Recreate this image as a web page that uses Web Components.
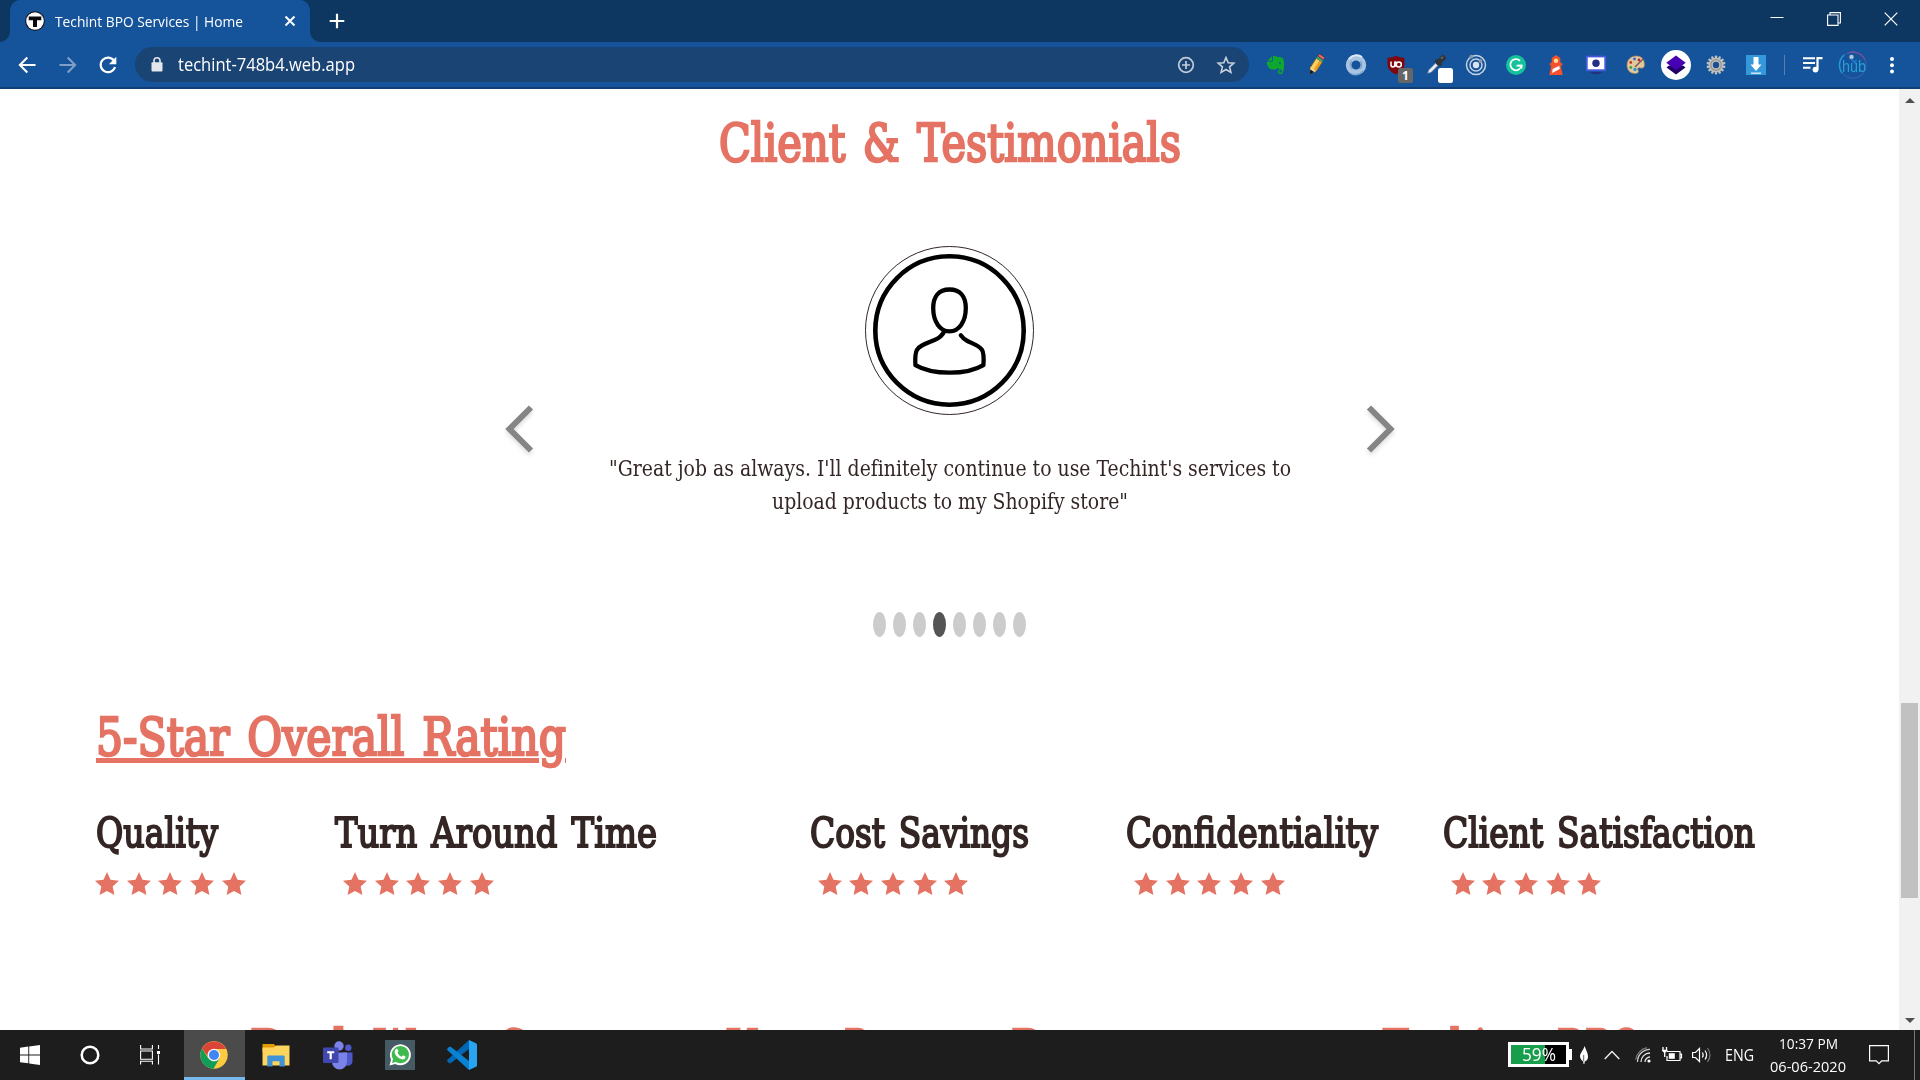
<!DOCTYPE html>
<html lang="en">
<head>
<meta charset="utf-8">
<title>Techint BPO Services | Home</title>
<style>
html,body{margin:0;padding:0;width:1920px;height:1080px;overflow:hidden;background:#fff}
</style>
</head>
<body>
<desktop-screen></desktop-screen>
<script>
const define=(name,cls)=>customElements.define(name,cls);
const view=(name,html)=>define(name,class extends HTMLElement{
  connectedCallback(){ if(!this.shadowRoot){ this.attachShadow({mode:'open'}).innerHTML=html; } }
});

/* One line of text, condensed or widened to the width given */
define('fit-text',class extends HTMLElement{
  connectedCallback(){
    if(this.shadowRoot) return;
    const r=this.attachShadow({mode:'open'});
    r.innerHTML=`<style>:host{display:block;white-space:nowrap;flex:none;font-variant-ligatures:none}
      .t{display:inline-block;transform-origin:0 50%;vertical-align:top}
      :host([underline]) .t{text-decoration:underline;text-decoration-thickness:5px;text-underline-offset:3px}</style><span class="t"><slot></slot></span>`;
    const w=+this.getAttribute('w'), t=r.querySelector('.t');
    this.style.width=w+'px';
    t.style.transform=`scaleX(${w/t.getBoundingClientRect().width})`;
  }
});

const teeth=Array.from({length:7},(_,i)=>`<rect x="8.8" y=".5" width="2.4" height="19" rx=".8" transform="rotate(${i*180/7} 10 10)"/>`).join('');
const ICONS={
 favicon:[20,20,`<circle cx="10" cy="10" r="9.8" fill="#111"/><circle cx="10" cy="10" r="8.8" fill="#fff"/><path d="M3.700 5.500h12.600v3.700H12V16H8V9.200H3.700z" fill="#0a0a0a"/>`],
 close:[12,12,`<path d="M1.5 1.5l9 9m0-9l-9 9" stroke="#fff" stroke-width="2"/>`],
 plus:[16,16,`<path d="M8 .7v14.6M.7 8h14.6" stroke="#fff" stroke-width="2.2"/>`],
 back:[18,18,`<path d="M17.5 9H2.3M9.3 1.6L1.9 9l7.4 7.4" fill="none" stroke="#fff" stroke-width="2.1"/>`],
 forward:[18,18,`<path d="M.5 9h15.2M8.7 1.6L16.1 9l-7.4 7.4" fill="none" stroke="#7e9fc8" stroke-width="2.1"/>`],
 reload:[18,18,`<path d="M15.2 5A7.3 7.3 0 1 0 16 11" fill="none" stroke="#fff" stroke-width="2.2"/><path d="M17.3.8v7.4H9.9z" fill="#fff"/>`],
 lock:[12,15,`<rect x=".5" y="5.2" width="11" height="9.3" rx="1" fill="#e3e6ea"/><path d="M3 6V3.8a3 3 0 0 1 6 0V6" fill="none" stroke="#e3e6ea" stroke-width="1.6"/>`],
 zoomin:[18,18,`<circle cx="9" cy="9" r="7.3" fill="none" stroke="#c3ccd8" stroke-width="1.7"/><path d="M9 5v8M5 9h8" stroke="#c3ccd8" stroke-width="1.7"/>`],
 star:[18,18,`<path d="M9 1.6l2.2 5.1 5.6.5-4.2 3.7 1.3 5.5L9 13.5l-4.9 2.9 1.3-5.5L1.2 7.2l5.6-.5z" fill="none" stroke="#c9d0da" stroke-width="1.6"/>`],
 evernote:[20,20,`<path d="M6 1.2v3.5c0 .6-.4 1-1 1H1.5zM7 1.2c1.6-.5 3.2-.2 3.800.8 2 .1 4.900.2 6 1.200 1.400 2 1.600 6.500 1 10.500-.5 3.500-1 5.500-3.300 5.500-2 0-2.600-1.200-2.600-2.600 0-1.500.9-2.200 2.400-2.200v1.500c-.8 0-1.100.3-1.100.9s.6.9 1.300.9c1.200 0 1.300-1.400 1.200-3-2.400-.4-3.400-.8-3.800-2.300-.5 1.500-1.500 2.100-3.500 2.100-3.600 0-5.600-1-6.200-3.100C.8 9.700.6 7.800 1 6.700h4.300C6.400 6.700 7 6 7 5z" fill="#0fa82f"/><circle cx="14" cy="8.200" r="1" fill="#15549a"/>`],
 pencil:[20,20,`<g transform="rotate(33 10 10)"><path d="M6.500 4h7v11L10 20.500 6.500 15z" fill="#f9d060" stroke="#6c5527" stroke-width=".8"/><path d="M10.500 4h3v11h-3z" fill="#ea9c22"/><path d="M6.500 15h7L10 20.500z" fill="#ecd3a0"/><path d="M7.700 17h4.600L10 21z" fill="#111"/><rect x="6.500" y="1.400" width="7" height="3" fill="#3e9d63"/><rect x="6.500" y="-1.200" width="7" height="2.800" rx="1" fill="#e06a70" stroke="#511" stroke-width=".5"/></g>`],
 ring:[22,22,`<circle cx="11" cy="11" r="7.400" fill="none" stroke="#a9c4e1" stroke-width="5.600"/><path d="M4 5a9.500 9.500 0 0 1 13-2" fill="none" stroke="#dfeaf5" stroke-width="2"/><path d="M18 17a9.500 9.500 0 0 1-13 2M6.500 7a6 6 0 0 0 1 8M15.500 7a6 6 0 0 1-1 8" fill="none" stroke="#7ba3d0" stroke-width="1.500"/>`],
 shield:[20,20,`<path d="M10 .5c2 1.500 5 2.200 8.500 2.200v6c0 5-3 8.300-8.500 10.800C4.500 17 1.500 13.700 1.500 8.700v-6C5 2.700 8 2 10 .5z" fill="#800610"/><path d="M5 6.500V10a1.900 1.900 0 0 0 3.800 0V6.500M9.600 6.200v5.600" fill="none" stroke="#fff" stroke-width="1.500"/><circle cx="12.800" cy="9.400" r="2.500" fill="none" stroke="#fff" stroke-width="1.500"/>`],
 dropper:[20,20,`<path d="M1.800 18.200l1-3.200 8-8 2.300 2.300-8 8z" fill="#e9edf2" stroke="#8894a3" stroke-width=".7"/><path d="M9.500 5l5.600 5.600" stroke="#2f3338" stroke-width="3"/><path d="M12.500 7.500l4.600-4.600" stroke="#30343a" stroke-width="5.500" stroke-linecap="round"/><path d="M15 3.500l2-1.500" stroke="#6e747c" stroke-width="1.500"/>`],
 target:[22,22,`<g fill="none" stroke="#c3d2e4" stroke-width="1.500"><circle cx="11" cy="11" r="9.500"/><circle cx="11" cy="11" r="6"/></g><circle cx="11" cy="11" r="3.200" fill="#dbe4ee"/><circle cx="6.300" cy="2.700" r="1.900" fill="#8d99a8"/><circle cx="15.500" cy="7" r="1.900" fill="#8d99a8"/>`],
 grammar:[20,20,`<circle cx="10" cy="10" r="10" fill="#15c39a"/><path d="M14 5.800A5.600 5.600 0 1 0 15.500 10.600h-5" fill="none" stroke="#fff" stroke-width="1.700"/><path d="M12.600 10.600h3v3" fill="none" stroke="#fff" stroke-width="1.600"/>`],
 lighthouse:[20,20,`<path d="M10 0l4.300 3v4.500l2 1v2h-1.500l1.900 9.500H3.300l1.900-9.500H3.700v-2l2-1V3z" fill="#f4512c"/><circle cx="10" cy="5.700" r="2.200" fill="#fde293"/><path d="M6.600 14l6.700-3.300.5 3.300-7.700 4z" fill="#fff"/>`],
 screen:[20,20,`<path d="M4 17h12c-1 3-11 3-12 0z" fill="#26317f"/><rect x=".8" y="1.500" width="18.400" height="13.700" fill="#fff" stroke="#4659dc" stroke-width="1.800"/><circle cx="10" cy="8.300" r="3.700" fill="#252f85"/>`],
 palette:[20,20,`<path d="M11 1C5 .5 1 5 1 10s3 8.500 8 8.500c3.500 0 4-2 3-3.500s.5-3 2.500-2c2 .7 4-.5 4-3C18.500 5 16 1.300 11 1z" fill="#e2c79f" stroke="#a78358" stroke-width=".7"/><circle cx="8.500" cy="4" r="1.400" fill="#3764d4"/><circle cx="4.800" cy="7.500" r="1.400" fill="#cb352c"/><circle cx="4.800" cy="12.500" r="1.400" fill="#45a23d"/><circle cx="9" cy="14.500" r="1.700" fill="#2698dd"/><circle cx="13" cy="5" r="1.400" fill="#b22a2a"/><path d="M9 12l8-8" stroke="#6d5842" stroke-width="1.300"/>`],
 layers:[30,30,`<circle cx="15" cy="15" r="15" fill="#fff"/><path d="M5.500 17.500L15 24.500l9.500-7L22 15.500H8z" fill="#220066"/><path d="M15 5.500l9.700 7.300L15 20l-9.700-7.200z" fill="#4700b3"/>`],
 gear:[20,20,`<g fill="#c0c0bd">${teeth}<circle cx="10" cy="10" r="7.300"/></g><circle cx="10" cy="10" r="5.300" fill="none" stroke="#969490" stroke-width="1.300"/><circle cx="10" cy="10" r="3.200" fill="#184f94"/>`],
 download:[20,20,`<rect width="20" height="20" fill="#3498db"/><path d="M7.500 2h5v7.500h3L10 16 4.500 9.500h3z" fill="#fff"/><path d="M5 18.200h10" stroke="#cfe7f7" stroke-width="1.500"/>`],
 playlist:[20,18,`<path d="M0 2.300h12M0 7h12M0 11.700h7.500" stroke="#fff" stroke-width="2.100"/><circle cx="12.500" cy="13.600" r="2.900" fill="#fff"/><path d="M14.500 13.500V2.200h5" fill="none" stroke="#fff" stroke-width="2.200"/>`],
 hub:[28,28,`<circle cx="14" cy="14" r="13.300" fill="none" stroke="#3c63a9" stroke-width="1"/><path d="M3 22A13.300 13.300 0 0 1 5 4" fill="none" stroke="#2498d8" stroke-width="1.400"/><path d="M9 2A13.300 13.300 0 0 1 26 9" fill="none" stroke="#75519b" stroke-width="1.200"/><circle cx="12.500" cy="6" r="2.200" fill="#b7c9d6"/><path d="M12 8l4 4 1-3" stroke="#1b79c9" stroke-width="2" fill="none"/>`],
 menu:[6,18,`<g fill="#fff"><circle cx="3" cy="3" r="2"/><circle cx="3" cy="9.300" r="2"/><circle cx="3" cy="15.500" r="2"/></g>`],
 min:[14,14,`<path d="M.5 5.500h13" stroke="#fff"/>`],
 restore:[14,14,`<path d="M3 3V.6h10.400v10.400H11M.6 3h10.400v10.400H.6z" fill="none" stroke="#fff" stroke-width="1.100"/>`],
 winclose:[14,14,`<path d="M.7.7l12.600 12.600m0-12.600L.7 13.300" stroke="#fff" stroke-width="1.200"/>`],
 windows:[20,20,`<path d="M0 2.700l8.300-1.100v7.900H0zM9.200 1.500L20 0v9.500H9.200zM0 10.400h8.300v7.900L0 17.200zM9.200 10.400H20V20L9.200 18.500z" fill="#fff"/>`],
 cortana:[20,20,`<circle cx="10" cy="10" r="8.300" fill="none" stroke="#fff" stroke-width="2.500"/>`],
 taskview:[20,20,`<path d="M.6 0v4h11.800V0M.6 19.500v-3.200h11.800v3.200M.6 6h11.800v8.200H.6zM18.500 0v4M18.500 9.500V19.500" fill="none" stroke="#fff" stroke-width="1.100"/><rect x="17" y="6" width="3" height="3" fill="#fff"/>`],
 chrome:[28,28,`<circle cx="14" cy="14" r="13.700" fill="#fdcb3e"/><path d="M2.100 7.200A13.700 13.700 0 0 0 13.500 27.700l6-10.500-5.500 3.200-5.800-3.200z" fill="#0f9d58"/><path d="M2.100 7.200A13.700 13.700 0 0 1 26 7.900H14L8.300 10.700 7.500 15z" fill="#db4437"/><circle cx="14" cy="14" r="6.300" fill="#f4f4f4"/><circle cx="14" cy="14" r="5" fill="#4285f4"/>`],
 explorer:[28,24,`<path d="M.5 1h11.500l2 2.500H13V9H.5z" fill="#e09b00"/><path d="M.5 4.500h11L14 2.500h13.500v20H.5z" fill="#fdd45d"/><path d="M5.300 23.500v-10q0-1 1-1h15.400q1 0 1 1v10h-5.200v-5.300h-7v5.300z" fill="#3e92d8"/>`],
 teams:[30,28,`<circle cx="25.300" cy="6.700" r="3.200" fill="#5059c9"/><path d="M20 11.500h9.500v8.200a4.500 4.500 0 0 1-9 1z" fill="#4f58c8"/><circle cx="16" cy="5" r="4.700" fill="#7b83eb"/><path d="M9 11.500h15V21a7.500 7.500 0 0 1-15 0z" fill="#7b83eb"/><rect x="0" y="6.500" width="15.500" height="15.500" rx="1" fill="#4148ad"/><path d="M4.200 10.200h7v2H8.800v6H6.600v-6H4.200z" fill="#fff"/>`],
 whatsapp:[30,30,`<rect width="30" height="30" fill="#465a64"/><path d="M4.500 25.500l1.500-6A10.500 10.500 0 1 1 10.300 24z" fill="#fff"/><path d="M7 23l1-3.900a8.600 8.600 0 1 1 2.900 2.900z" fill="#40b94f"/><path d="M11 9.300c.8-.8 1.500-.5 1.800.2l.7 1.700-1 1.600c1 2 2.300 3.100 4 3.900l1.500-1.400 2.500 1.300c.3 2-1.300 2.900-2.900 2.900-4-.5-8-4.500-8-7.700 0-1 .6-1.800 1.400-2.500z" fill="#fff"/>`],
 vscode:[30,30,`<path d="M22 0v9L4 23c-.7.500-1.400.4-2 0l-1.500-1.500c-.6-.6-.6-1.200 0-1.800z" fill="#0067b4"/><path d="M22 30v-9L4 7c-.7-.5-1.400-.4-2 0L.5 8.500c-.6.6-.6 1.200 0 1.800z" fill="#0a82d4"/><path d="M22 0l7 3.200c.7.400 1 .8 1 1.500v20.600c0 .7-.3 1.200-1 1.500L22 30z" fill="#27a5f2"/>`],
 leaf:[10,18,`<path d="M5.500 0C7 4 9 7 9 10.500S7 15 5.700 15.500L5.400 18H4.500l-.2-2.500C2.500 14.500 1 12.500 1 10S4.500 4 5.500 0z" fill="#fff"/><path d="M4.700 9v6" stroke="#333" stroke-width=".8"/>`],
 up:[16,10,`<path d="M.7 9L8 1.500 15.300 9" fill="none" stroke="#eee" stroke-width="1.400"/>`],
 wifi:[16,16,`<g fill="none" stroke="#e6e6e6" stroke-width="1.300"><path d="M10 15a5 5 0 0 1 5-5M6 15a9 9 0 0 1 9-9"/><path d="M2.500 15A12.500 12.500 0 0 1 15 2.300" stroke="#ccc"/><path d="M.6 12.500A14.500 14.500 0 0 1 12 .7" stroke="#777"/></g><circle cx="14" cy="14" r="1.600" fill="#fff"/>`],
 plug:[20,16,`<path d="M5 4.500h13v9H5V9M18 7h1.500v4H18" fill="none" stroke="#fff" stroke-width="1.200"/><rect x="6.800" y="6.200" width="6" height="5.600" fill="#fff"/><path d="M1 0v3M4.500 0v3M0 3.500h5.500M1 4.500h3.500M2.700 5v5" stroke="#fff" stroke-width="1.300"/>`],
 sound:[20,16,`<path d="M.6 5.500H3.500L7.500 1.500v13l-4-4H.6z" fill="none" stroke="#fff" stroke-width="1.200"/><path d="M10.300 5.500q1.800 2.500 0 5M13 3.500q3.200 4.500 0 9" fill="none" stroke="#fff" stroke-width="1.200"/><path d="M15.500 1q5 7 0 14" fill="none" stroke="#777" stroke-width="1.200"/>`],
 notice:[20,20,`<path d="M.6 .6h18.800v15.200h-6.700L10 18.700l-2.700-2.900H.6z" fill="none" stroke="#fff" stroke-width="1.200"/>`],
 rate:[24,23,`<path d="M12 0l3.500 7.700 8.500 1.100-6.300 5.700L19.400 23 12 18.900 4.600 23l1.700-8.500L0 8.800l8.500-1.100z" fill="#e57364"/>`],
 prev:[32,50,`<path d="M28 3.500L6.500 25 28 46.500" fill="none" stroke="#858585" stroke-width="6"/>`],
 next:[32,50,`<path d="M4 3.500L25.500 25 4 46.500" fill="none" stroke="#858585" stroke-width="6"/>`],
 avatar:[169,169,`<circle cx="84.500" cy="84.500" r="84" fill="none" stroke="#332624"/><circle cx="84.500" cy="84.500" r="74.200" fill="none" stroke="#000" stroke-width="4.600"/><path d="M84.500 43.500c-11 0-16.300 7.500-16.300 18.500 0 14 7 23.300 16.300 23.300S100.800 76 100.800 62c0-11-5.300-18.500-16.300-18.500zM79.500 84.500c-2 5.500-6 8-10.500 9.800-9 3.700-14.500 5.500-17 9.500-2.300 4-1.900 10-1.600 15.300 9 5.300 21 7.600 34.500 7.600s24.500-2.300 33.500-7.600c.4-5.300.9-11.300-1.400-15.300-2.500-4-8.500-5.800-15-9-2.700-1.400-4.500-3.300-6.200-5.600" fill="none" stroke="#000" stroke-width="4.300" stroke-linecap="round" stroke-linejoin="round"/>`],
};
define('ui-icon',class extends HTMLElement{
  connectedCallback(){
    if(this.shadowRoot) return;
    const [w,h,body]=ICONS[this.getAttribute('name')];
    this.attachShadow({mode:'open'}).innerHTML=`<style>:host{display:block;flex:none;width:${w}px;height:${h}px}svg{display:block;overflow:visible}</style><svg width="${w}" height="${h}" viewBox="0 0 ${w} ${h}">${body}</svg>`;
  }
});
const icon=n=>`<ui-icon name="${n}"></ui-icon>`;

view('tab-strip',`<style>
:host{display:flex;height:42px;background:#0d3661;box-sizing:border-box;padding-left:10px;align-items:stretch}
.tab{position:relative;width:300px;box-sizing:border-box;background:#15549a;border-radius:10px 10px 0 0;display:flex;align-items:center;padding:0 14px 0 15px;color:#fff;font:15px/20px "Open Sans",sans-serif}
.tab:before,.tab:after{content:"";position:absolute;bottom:0;width:10px;height:10px}
.tab:before{left:-10px;background:radial-gradient(circle at 0 0,#0d3661 9.500px,#15549a 10px)}
.tab:after{right:-10px;background:radial-gradient(circle at 100% 0,#0d3661 9.500px,#15549a 10px)}
fit-text{margin:0 0 1px 10px}.x{margin-left:auto}
.new{margin:13px 0 0 19px}
.win{margin-left:auto;display:flex;gap:43px;padding:12px 22px 0 0}
</style>
<div class="tab">${icon('favicon')}<fit-text w="188">Techint BPO Services | Home</fit-text><div class="x">${icon('close')}</div></div>
<div class="new">${icon('plus')}</div>
<div class="win">${icon('min')}${icon('restore')}${icon('winclose')}</div>`);

view('extension-bar',`<style>
:host{display:flex;flex:none}
.e{position:relative;width:40px;height:34px;display:flex;align-items:center;justify-content:center;flex:none}
.b{position:absolute;left:22px;top:20px;width:15px;height:15px;border-radius:2.500px;background:#666;color:#fff;font:bold 12px/15px "Open Sans",sans-serif;text-align:center}
.w{background:#fff}
</style>${['evernote','pencil','ring','shield','dropper','target','grammar','lighthouse','screen','palette','layers','gear','download'].map(n=>`<div class="e">${icon(n)}${n==='shield'?'<div class="b">1</div>':n==='dropper'?'<div class="b w"></div>':''}</div>`).join('')}`);

view('tool-bar',`<style>
:host{display:flex;height:47px;box-sizing:border-box;background:#15549a;border-bottom:2px solid #0f3f75;align-items:center;padding:0 0 0 18px}
.nav{display:flex;gap:22.500px;width:117px;flex:none}
.omni{width:1114px;height:35px;flex:none;box-sizing:border-box;border-radius:18px;background:#1a4474;display:flex;align-items:center;padding:0 14px 0 16px;color:#fff;font:18px/24px "Open Sans",sans-serif}
.omni fit-text{margin:0 0 1px 15px}
.acts{margin-left:auto;display:flex;gap:22px}
extension-bar{margin-left:7px}
.sep{width:1px;height:20px;background:#5680b2;margin:0 18px 0 8px}
.hub{position:relative;margin:0 22px 0 16px}
.hub fit-text{position:absolute;left:3px;top:6px;color:#279fd4;font:17px/20px "Liberation Sans",sans-serif}
</style>
<div class="nav">${icon('back')}${icon('forward')}${icon('reload')}</div>
<div class="omni">${icon('lock')}<fit-text w="177">techint-748b4.web.app</fit-text><div class="acts">${icon('zoomin')}${icon('star')}</div></div>
<extension-bar></extension-bar><div class="sep"></div>${icon('playlist')}
<div class="hub">${icon('hub')}<fit-text w="24">hub</fit-text></div>${icon('menu')}`);

view('client-carousel',`<style>
:host{display:flex;flex-direction:column;align-items:center;flex:none;width:1899px}
.row{display:flex;width:894px;justify-content:space-between;align-items:flex-start}
.arrow{margin-top:158px;filter:drop-shadow(0 3px 2px rgba(0,0,0,.13))}
.mid{display:flex;flex-direction:column;align-items:center}
.q{margin-top:37px;display:flex;flex-direction:column;align-items:center;font:23px/33px "DejaVu Serif",serif;color:#332624}
.dots{display:flex;gap:7px;margin-top:94px}
.dots i{width:13px;height:25px;border-radius:50%;background:#ccc}.dots .on{background:#555}
</style>
<div class="row"><div class="arrow">${icon('prev')}</div>
<div class="mid">${icon('avatar')}<div class="q"><fit-text w="682">"Great job as always. I'll definitely continue to use Techint's services to</fit-text><fit-text w="356">upload products to my Shopify store"</fit-text></div></div>
<div class="arrow">${icon('next')}</div></div>
<div class="dots"><i></i><i></i><i></i><i class="on"></i><i></i><i></i><i></i><i></i></div>`);

define('rating-column',class extends HTMLElement{
  connectedCallback(){
    if(this.shadowRoot) return;
    this.attachShadow({mode:'open'}).innerHTML=`<style>
    :host{display:block;flex:none;width:${this.getAttribute('col')}px}
    fit-text{font:41px/50px "DejaVu Serif",serif;-webkit-text-stroke:2px #332624;word-spacing:.1em;color:#332624}
    .s{display:flex;gap:7.700px;margin:14px 0 0 ${this.getAttribute('inset')}px}
    </style><fit-text w="${this.getAttribute('w')}">${this.getAttribute('label')}</fit-text><div class="s">${icon('rate').repeat(5)}</div>`;
  }
});

view('scroll-bar',`<style>:host{display:flex;flex-direction:column;align-items:center;width:21px;background:#f1f1f1;box-sizing:border-box;padding:9px 0 7px}
.u{border:5px solid transparent;border-top:0;border-bottom:5px solid #505050}
.d{border:5px solid transparent;border-bottom:0;border-top:5px solid #505050;margin-top:auto}
.t{width:17px;height:195px;background:#c1c1c1;margin-top:600px}</style><div class="u"></div><div class="t"></div><div class="d"></div>`);

view('site-page',`<style>
:host{display:flex;height:941px;background:#fff;overflow:hidden}
.p{width:1899px;display:flex;flex-direction:column;overflow:hidden;height:941px}
.h{font:53px/64px "DejaVu Serif",serif;-webkit-text-stroke:2.600px #e57364;word-spacing:.1em;color:#e57364;height:64px;flex:none;display:flex}
.title{margin:22px 0 71px;justify-content:center}
.five{margin:68px 0 0 96px}
.cols{display:flex;margin:39px 0 0 96px;height:87px;flex:none}
.next{margin-top:122px;padding-left:250px}
</style>
<div class="p">
<div class="h title"><fit-text w="462">Client &amp; Testimonials</fit-text></div>
<client-carousel></client-carousel>
<div class="h five"><fit-text w="470" underline>5-Star Overall Rating</fit-text></div>
<div class="cols">
<rating-column label="Quality" w="122" col="239" inset="-1"></rating-column>
<rating-column label="Turn Around Time" w="322" col="475" inset="8"></rating-column>
<rating-column label="Cost Savings" w="219" col="316" inset="7.5"></rating-column>
<rating-column label="Confidentiality" w="252" col="317" inset="8"></rating-column>
<rating-column label="Client Satisfaction" w="312" col="320" inset="7.500"></rating-column>
</div>
<div class="h next"><fit-text w="110">Back</fit-text><fit-text w="108" style="margin-left:14px">Wave</fit-text><fit-text w="29" style="margin-left:16px">C</fit-text><fit-text w="100" style="margin-left:201px">Your</fit-text><fit-text w="140" style="margin-left:16px">Process</fit-text><fit-text w="29" style="margin-left:27px">P</fit-text><fit-text w="144" style="margin-left:343px">Techint</fit-text><fit-text w="85" style="margin-left:30px">BPO</fit-text></div>
</div>
<scroll-bar></scroll-bar>`);

view('task-bar',`<style>
:host{display:flex;height:50px;background:#1d1d1d;color:#fff;font:16px/22px "Open Sans",sans-serif}
.c{width:60px;display:flex;align-items:center;justify-content:center;flex:none}
.a{width:61px;margin-left:1px;box-sizing:border-box;padding-right:2px}.first{margin-left:4px}
.on{background:#4b4b4b;box-shadow:inset 0 -3px #76b9ed}
.tray{margin-left:auto;display:flex;align-items:center;flex:none}
.bat{position:relative;width:61px;height:25px;box-sizing:border-box;border:3px solid #fff;background:linear-gradient(90deg,#179e4c 0 34px,#000 34px);display:flex;justify-content:center;font:18px/18px "Open Sans",sans-serif;margin-bottom:1px}
.bat:after{content:"";position:absolute;left:58px;top:4px;width:3px;height:11px;background:#fff}
.clock{display:flex;flex-direction:column;align-items:center;font-size:15px;line-height:23px;margin:0 0 1px 16px;width:76px}
.end{width:1px;height:50px;background:#777;margin:0 5px 0 25px}
</style>
<div class="c">${icon('windows')}</div><div class="c">${icon('cortana')}</div><div class="c">${icon('taskview')}</div>
<div class="c a first on">${icon('chrome')}</div>${['explorer','teams','whatsapp','vscode'].map(n=>`<div class="c a">${icon(n)}</div>`).join('')}
<div class="tray"><div class="bat"><fit-text w="34">59%</fit-text></div>
<div style="margin-left:10px">${icon('leaf')}</div><div style="margin-left:15px">${icon('up')}</div><div style="margin-left:15px">${icon('wifi')}</div><div style="margin-left:11px">${icon('plug')}</div><div style="margin-left:10px">${icon('sound')}</div>
<fit-text w="29" style="margin-left:13px">ENG</fit-text>
<div class="clock"><fit-text w="59">10:37 PM</fit-text><fit-text w="76">06-06-2020</fit-text></div>
<div style="margin-left:23px">${icon('notice')}</div><div class="end"></div></div>`);

view('desktop-screen',`<style>:host{display:flex;flex-direction:column;width:1920px;height:1080px;overflow:hidden}tab-strip,tool-bar,site-page,task-bar{flex:none}</style>
<tab-strip></tab-strip><tool-bar></tool-bar><site-page></site-page><task-bar></task-bar>`);
</script>
</body>
</html>
